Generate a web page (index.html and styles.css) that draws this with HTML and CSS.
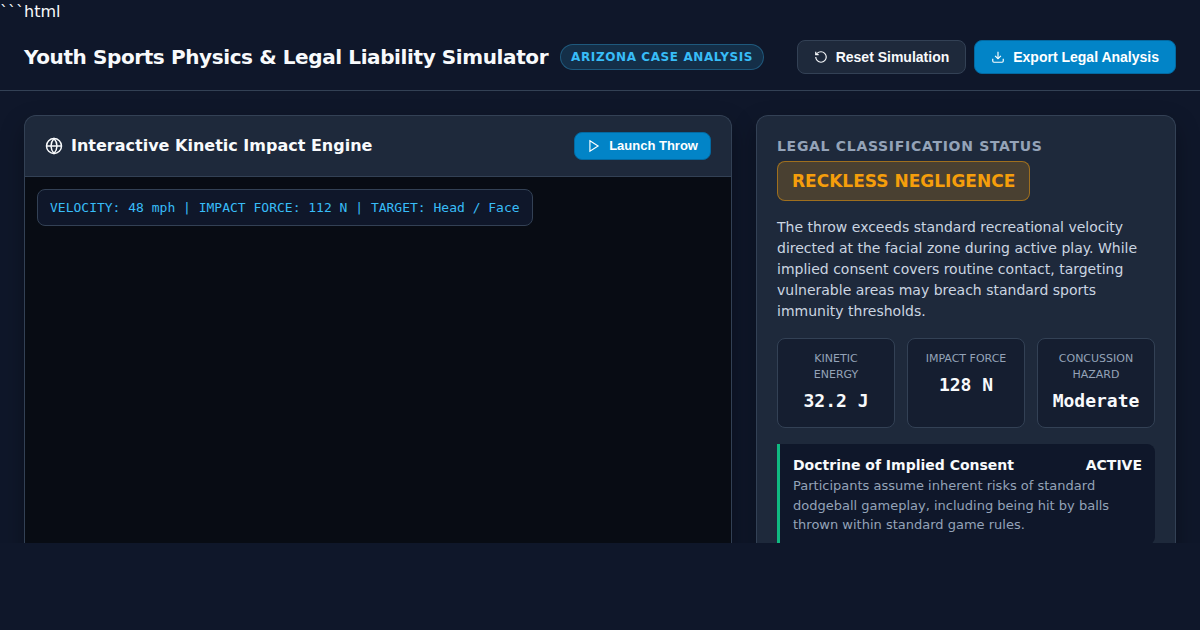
FILE: index.html
```html
<!DOCTYPE html>
<html lang="en">
<head>
  <meta charset="UTF-8">
  <meta name="viewport" content="width=device-width, initial-scale=1.0">
  <title>Youth Sports Physics &amp; Legal Liability Simulator</title>
  <link rel="stylesheet" href="styles.css">
</head>
<body>
  <div class="code-fence">```html</div>

  <header class="topbar">
    <div class="brand">
      <h1>Youth Sports Physics &amp; Legal Liability Simulator</h1>
      <span class="tag">ARIZONA CASE ANALYSIS</span>
    </div>
    <div class="actions">
      <button type="button" class="btn">
        <svg width="14" height="14" viewBox="0 0 24 24" fill="none" stroke="currentColor" stroke-width="2">
          <path d="M3 12a9 9 0 1 0 9-9 9.75 9.75 0 0 0-6.74 2.74L3 8"/>
          <path d="M3 3v5h5"/>
        </svg>
        Reset Simulation
      </button>
      <button type="button" class="btn btn-primary">
        <svg width="14" height="14" viewBox="0 0 24 24" fill="none" stroke="currentColor" stroke-width="2">
          <path d="M21 15v4a2 2 0 0 1-2 2H5a2 2 0 0 1-2-2v-4"/>
          <path d="M7 10l5 5 5-5"/>
          <path d="M12 15V3"/>
        </svg>
        Export Legal Analysis
      </button>
    </div>
  </header>

  <main class="workspace">
    <section class="panel engine">
      <div class="panel-header">
        <h2>
          <svg width="18" height="18" viewBox="0 0 24 24" fill="none" stroke="currentColor" stroke-width="2">
            <circle cx="12" cy="12" r="10"/>
            <path d="M2 12h20"/>
            <path d="M12 2a15.3 15.3 0 0 1 4 10 15.3 15.3 0 0 1-4 10 15.3 15.3 0 0 1-4-10 15.3 15.3 0 0 1 4-10z"/>
          </svg>
          Interactive Kinetic Impact Engine
        </h2>
        <button type="button" class="btn btn-primary btn-small">
          <svg width="14" height="14" viewBox="0 0 24 24" fill="none" stroke="currentColor" stroke-width="2">
            <polygon points="5 3 19 12 5 21 5 3"/>
          </svg>
          Launch Throw
        </button>
      </div>
      <div class="stage">
        <div class="hud">VELOCITY: 48 mph | IMPACT FORCE: 112 N | TARGET: Head / Face</div>
      </div>
    </section>

    <aside class="panel legal">
      <div class="status">
        <h3>LEGAL CLASSIFICATION STATUS</h3>
        <div class="verdict">RECKLESS NEGLIGENCE</div>
      </div>
      <p class="summary">The throw exceeds standard recreational velocity directed at the facial zone during active play. While implied consent covers routine contact, targeting vulnerable areas may breach standard sports immunity thresholds.</p>

      <div class="metrics">
        <div class="metric">
          <div class="metric-label">KINETIC ENERGY</div>
          <div class="metric-value">32.2 J</div>
        </div>
        <div class="metric">
          <div class="metric-label">IMPACT FORCE</div>
          <div class="metric-value">128 N</div>
        </div>
        <div class="metric">
          <div class="metric-label">CONCUSSION HAZARD</div>
          <div class="metric-value">Moderate</div>
        </div>
      </div>

      <div class="doctrine">
        <div class="doctrine-title">
          <span>Doctrine of Implied Consent</span>
          <span>ACTIVE</span>
        </div>
        <p>Participants assume inherent risks of standard dodgeball gameplay, including being hit by balls thrown within standard game rules.</p>
      </div>
    </aside>
  </main>
</body>
</html>
```
FILE: styles.css
```css
* {
  box-sizing: border-box;
  margin: 0;
  padding: 0;
}

body {
  display: flex;
  flex-direction: column;
  height: 100vh;
  padding-bottom: 87px;
  overflow: hidden;
  background: #0f172a;
  color: #f8fafc;
  font-family: "DejaVu Sans", sans-serif;
  font-size: 16px;
  line-height: 1.5;
}

.topbar {
  display: flex;
  justify-content: space-between;
  align-items: center;
  padding: 16px 24px;
  border-bottom: 1px solid #334155;
}

.brand {
  display: flex;
  align-items: center;
  gap: 12px;
}

.brand h1 {
  font-size: 20px;
  font-weight: 700;
  letter-spacing: -0.02em;
}

.tag {
  padding: 3px 10px;
  border: 1px solid rgba(56, 189, 248, 0.3);
  border-radius: 20px;
  background: rgba(56, 189, 248, 0.15);
  color: #38bdf8;
  font-size: 12px;
  font-weight: 600;
  letter-spacing: 0.05em;
}

.actions {
  display: flex;
  gap: 8px;
}

.btn {
  display: inline-flex;
  align-items: center;
  gap: 8px;
  padding: 8px 16px;
  border: 1px solid #334155;
  border-radius: 8px;
  background: #1e293b;
  color: #f8fafc;
  font-family: "Liberation Sans", Arial, sans-serif;
  font-size: 14px;
  font-weight: 600;
  line-height: 16px;
  cursor: pointer;
}

.btn-primary {
  border-color: #0369a1;
  background: #0284c7;
  color: #fff;
}

.btn-small {
  padding: 6px 12px;
  font-size: 13px;
  line-height: 14px;
}

.workspace {
  display: grid;
  grid-template-columns: 1fr 420px;
  gap: 24px;
  flex: 1;
  min-height: 0;
  padding: 24px 24px 0;
  overflow: hidden;
}

.panel {
  border: 1px solid #334155;
  border-bottom: none;
  border-radius: 12px 12px 0 0;
  background: #1e293b;
  box-shadow: 0 10px 25px rgba(0, 0, 0, 0.3);
}

.engine {
  display: flex;
  flex-direction: column;
  overflow: hidden;
}

.panel-header {
  display: flex;
  justify-content: space-between;
  align-items: center;
  padding: 16px 20px;
  border-bottom: 1px solid #334155;
}

.panel-header h2 {
  display: flex;
  align-items: center;
  gap: 8px;
  font-size: 16px;
  font-weight: 600;
}

.stage {
  flex: 1;
  padding: 12px;
  background: #080c14;
}

.hud {
  width: fit-content;
  padding: 8px 12px;
  border: 1px solid #334155;
  border-radius: 8px;
  background: #0f172a;
  color: #38bdf8;
  font-family: "DejaVu Sans Mono", monospace;
  font-size: 13px;
  line-height: 19px;
}

.legal {
  display: flex;
  flex-direction: column;
  gap: 16px;
  padding: 20px;
}

.status h3 {
  margin-bottom: 4px;
  color: #94a3b8;
  font-size: 14px;
  font-weight: 600;
  letter-spacing: 0.05em;
}

.verdict {
  width: fit-content;
  padding: 6px 14px;
  border: 1px solid rgba(245, 158, 11, 0.5);
  border-radius: 8px;
  background: rgba(245, 158, 11, 0.2);
  color: #f59e0b;
  font-size: 17px;
  font-weight: 700;
  line-height: 26px;
}

.summary {
  color: #cbd5e1;
  font-size: 14px;
}

.metrics {
  display: grid;
  grid-template-columns: repeat(3, 1fr);
  gap: 12px;
}

.metric {
  padding: 12px 13px;
  border: 1px solid #334155;
  border-radius: 8px;
  background: rgba(15, 23, 42, 0.6);
  text-align: center;
}

.metric-label {
  margin-bottom: 4px;
  color: #94a3b8;
  font-size: 11px;
  line-height: 16px;
}

.metric-value {
  font-family: "DejaVu Sans Mono", monospace;
  font-size: 18px;
  font-weight: 700;
  line-height: 28px;
}

.doctrine {
  padding: 10px 13px;
  border-left: 3px solid #10b981;
  border-radius: 0 8px 8px 0;
  background: #0f172a;
}

.doctrine-title {
  display: flex;
  justify-content: space-between;
  font-size: 14px;
  font-weight: 600;
  line-height: 22px;
}

.doctrine p {
  color: #94a3b8;
  font-size: 13px;
}
```
